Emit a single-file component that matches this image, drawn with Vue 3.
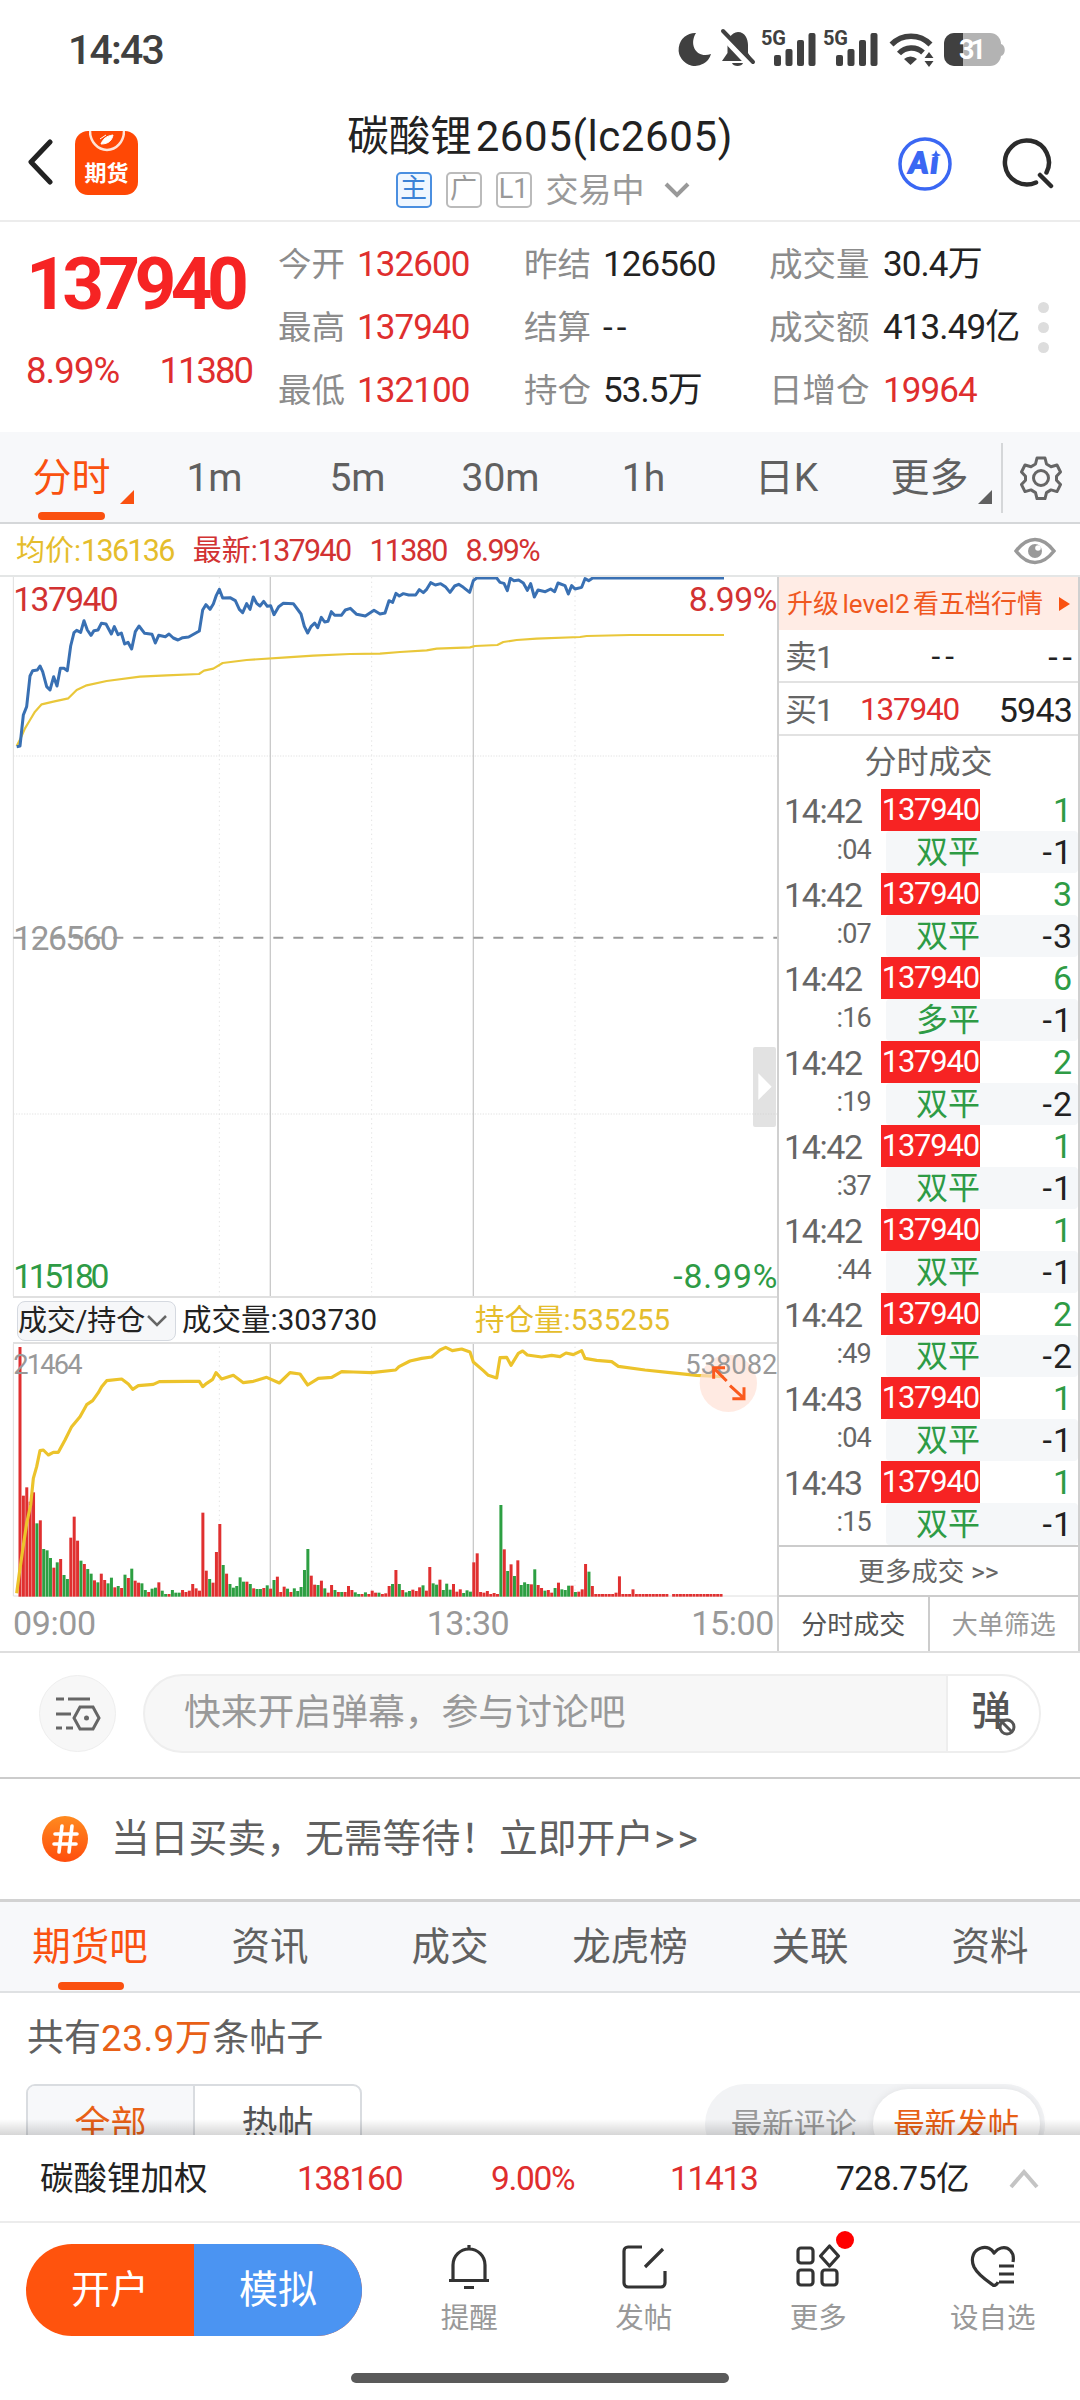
<template>
  <div class="page">
    <!-- 状态栏 -->
    <div class="status-bar">
      <span class="clock">14:43</span>
      <svg class="status-icons" width="340" height="42" viewBox="670 28 340 42">
        <path d="M696 33a16.500 16.500 0 1 0 15 21c-13 5-23-8-15-21z" fill="#404040" />
        <path d="M738 32c-7 1-10.500 7-10.500 13v8l-5.500 8h31l-5-8v-8c0-6-3-13-10-13z" fill="#404040" />
        <path d="M732 63h11c-1 4-10 4-11 0z" fill="#404040" />
        <path d="M721 33l31 33" stroke="#fff" stroke-width="8" />
        <path d="M723 31l30 31" stroke="#404040" stroke-width="4" stroke-linecap="round" />
        <text x="761" y="45" class="net" textLength="25">5G</text>
        <text x="823" y="45" class="net" textLength="25">5G</text>
        <g v-for="x in [774, 836]" :key="x" fill="#404040">
          <rect :x="x" y="55" width="7" height="11" rx="2" />
          <rect :x="x + 11.500" y="49" width="7" height="17" rx="2" />
          <rect :x="x + 23" y="40" width="7" height="26" rx="2" />
          <rect :x="x + 34.500" y="33" width="7" height="33" rx="2" />
        </g>
        <g fill="none" stroke="#404040" stroke-width="5.500">
          <path d="M891.500 44.500a27 27 0 0 1 39 0" />
          <path d="M899 53.500a17 17 0 0 1 24-1" />
        </g>
        <path d="M904 59a9.500 9.500 0 0 1 13 0l-6.500 6z" fill="#404040" />
        <path d="M929 52l4.500 6h-9zM929 67l4.500-6h-9z" fill="#404040" />
        <rect x="944" y="33" width="57" height="33" rx="11" fill="#b3b3b3" />
        <path d="M963 33v33h-9a10 10 0 0 1-10-10V43a10 10 0 0 1 10-10z" fill="#404040" />
        <path d="M1001 44c5 1 5 11 0 12z" fill="#b3b3b3" />
        <text x="959" y="59" class="battery" textLength="27">31</text>
      </svg>
    </div>

    <!-- 标题栏 -->
    <header class="header">
      <svg class="back" width="26" height="46" viewBox="0 0 26 46"><path d="M23 3L4 23l19 20" fill="none" stroke="#222" stroke-width="5" stroke-linecap="round" stroke-linejoin="round" /></svg>
      <div class="app-logo">
        <svg width="36" height="22" viewBox="0 0 36 22">
          <path d="M1 0a17 19 0 0 0 34 0" fill="none" stroke="#ffe3d6" stroke-width="2.500" />
          <path d="M12 13c2-5 5-8 12-9-1 5-4 9-12 9zM11 8l6-4" fill="#fff" stroke="#fff" stroke-width="1" />
        </svg>
        <span>期货</span>
      </div>
      <div class="title">
        <h1>碳酸锂<span>2605(lc2605)</span></h1>
        <div class="sub">
          <i class="tag main">主</i><i class="tag">广</i><i class="tag">L1</i>
          <span>交易中</span>
          <svg width="26" height="16" viewBox="0 0 26 16"><path d="M2 2l11 11L24 2" fill="none" stroke="#999" stroke-width="4" /></svg>
        </div>
      </div>
      <svg class="ai" width="54" height="54" viewBox="0 0 54 54">
        <circle cx="27" cy="27" r="25" fill="none" stroke="#3a67f3" stroke-width="3.500" />
        <text x="11" y="36" class="ai-text" textLength="29">Aı</text>
        <path d="M38 13l1.500 3.500L43 18l-3.500 1.500L38 23l-1.500-3.500L33 18l3.500-1.500z" fill="#3a67f3" />
      </svg>
      <svg class="search" width="54" height="54" viewBox="0 0 54 54">
        <path d="M36 46.500a22 22 0 1 1 10.500-10M40 39l11 11" fill="none" stroke="#2b2b2b" stroke-width="4.500" stroke-linecap="round" />
      </svg>
    </header>

    <!-- 行情数据 -->
    <section class="quote">
      <div class="price">
        <div class="last">137940</div>
        <div class="change"><span>8.99%</span><span class="diff">11380</span></div>
      </div>
      <div class="stats">
        <div v-for="s in stats" :key="s.label" class="stat">
          <label>{{ s.label }}</label><b :class="{ up: s.up, none: s.value === '--' }">{{ s.value }}</b>
        </div>
      </div>
      <div class="dots"><i></i><i></i><i></i></div>
    </section>

    <!-- 周期 -->
    <nav class="periods">
      <div v-for="(p, i) in periods" :key="p" class="period" :class="{ active: i === 0 }">
        <span>{{ p }}</span>
        <svg v-if="i === 0 || i === 6" class="corner" width="14" height="14"><path d="M14 0v14H0z" fill="currentColor" /></svg>
      </div>
      <div class="gear">
        <svg width="42" height="44" viewBox="0 0 42 44" fill="none" stroke="#666" stroke-width="3" stroke-linejoin="round">
          <path d="M17 2h8l1.500 6 4.500 2.700 6-1.700 3.500 7-4 4.300v4l4 4.300-3.500 7-6-1.700-4.500 2.700-1.500 6h-8l-1.500-6-4.500-2.700-6 1.700-3.500-7 4-4.300v-4l-4-4.300 3.500-7 6 1.700 4.500-2.700z" />
          <circle cx="21" cy="22" r="7.500" />
        </svg>
      </div>
    </nav>

    <div class="latest">
      <span class="avg">均价:<b>136136</b></span><span>最新:<b>137940</b></span><b>11380</b><b>8.99%</b>
      <svg width="42" height="28" viewBox="0 0 42 28">
        <path d="M2 14C9 5 15 2.500 21 2.500S33 5 40 14c-7 9-13 11.500-19 11.500S9 23 2 14z" fill="none" stroke="#999" stroke-width="3.500" />
        <circle cx="21" cy="14" r="7" fill="#999" /><circle cx="24" cy="11" r="2.800" fill="#fff" />
      </svg>
    </div>

    <main class="market">
      <div class="charts">
        <!-- 分时图 -->
        <svg class="price-chart" width="778" height="719" viewBox="0 51 2334 2157">
          <g fill="none" stroke="#dedede" stroke-width="3">
            <path d="M40 51V2208" />
            <path d="M658 51V2208M1115 51V2208M1725 51V2208" stroke="#e3e3e3" stroke-dasharray="4 10" />
            <path d="M40 588H2334M40 1662H2334" stroke="#e3e3e3" stroke-dasharray="4 4" />
            <path d="M811 51V2208M1420 51V2208" stroke="#cacaca" stroke-width="4" />
          </g>
          <path d="M40 1133H2334" stroke="#999" stroke-width="6" stroke-dasharray="30 30" />
          <polyline :points="avgLine" class="line" stroke="#e9c73a" stroke-width="6.500" />
          <polyline :points="priceLine" class="line" stroke="#3970b3" stroke-width="9" />
          <g class="axis">
            <text x="40" y="153" textLength="316" fill="#d23232">137940</text>
            <text x="2066" y="153" textLength="266" fill="#d23232">8.99%</text>
            <text x="40" y="1169" textLength="316" fill="#999">126560</text>
            <text x="40" y="2185" textLength="288" fill="#2e9b45">115180</text>
            <text x="2020" y="2185" textLength="312" fill="#2e9b45">-8.99%</text>
          </g>
          <rect x="2259" y="1461" width="69" height="240" rx="6" fill="#cfcfcf" opacity=".6" />
          <path d="M2275 1540l40 40-40 40z" fill="#fff" />
        </svg>
        <div class="indicator">
          <div class="picker">成交/持仓<svg width="20" height="12" viewBox="0 0 20 12"><path d="M1 1l9 9 9-9" fill="none" stroke="#666" stroke-width="2.500" /></svg></div>
          <span class="volume">成交量:303730</span>
          <span class="hold">持仓量:535255</span>
        </div>
        <!-- 成交量柱与持仓线 -->
        <svg class="volume-chart" width="778" height="254" viewBox="0 252 2334 762">
          <g fill="none" stroke="#dedede" stroke-width="3">
            <path d="M40 252V1008H2334" />
            <path d="M658 260V1008M1115 260V1008M1725 260V1008" stroke="#e3e3e3" stroke-dasharray="4 10" />
            <path d="M811 252V1008M1420 252V1008" stroke="#cacaca" stroke-width="4" />
          </g>
          <rect v-for="b in bars" :key="b.x" :x="b.x" :y="b.y" width="9" :height="b.h" :fill="b.color" />
          <polyline :points="holdLine" class="line" stroke="#ecc32b" stroke-width="9.500" />
          <circle cx="2185" cy="370" r="86" fill="#ffdfd3" opacity=".65" />
          <g class="axis small" fill="#999">
            <text x="40" y="342" textLength="208">21464</text>
            <text x="2056" y="342" textLength="276">538082</text>
          </g>
          <path d="M2180 363l-40-40M2141 356v-33h34M2190 377l42 38M2232 382v34h-35" fill="none" stroke="#fa5a1e" stroke-width="9" />
        </svg>
        <div class="times"><span>09:00</span><span class="mid">13:30</span><span>15:00</span></div>
      </div>

      <!-- 盘口 -->
      <aside class="book">
        <div class="upgrade"><span>升级 level2 看五档行情</span><svg width="11" height="14"><path d="M0 0l11 7-11 7z" fill="#fa5110" /></svg></div>
        <div class="level"><span>卖1</span><b class="none">--</b><em class="none">--</em></div>
        <div class="level"><span>买1</span><b class="up">137940</b><em>5943</em></div>
        <div class="book-title">分时成交</div>
        <div v-for="(t, i) in trades" :key="i" class="trade">
          <div class="when"><span>{{ t[0] }}</span><small>{{ t[1] }}</small></div>
          <div class="deal">
            <div class="top"><b>137940</b><span>{{ t[3] }}</span></div>
            <div class="bottom"><b>{{ t[2] }}</b><span><i>-</i>{{ t[4] }}</span></div>
          </div>
        </div>
        <div class="more-trades">更多成交 &gt;&gt;</div>
        <div class="book-tabs"><span class="on">分时成交</span><span>大单筛选</span></div>
      </aside>
    </main>

    <!-- 弹幕 -->
    <div class="danmu">
      <div class="danmu-set">
        <svg width="46" height="36" viewBox="0 0 46 36" fill="none" stroke="#666" stroke-width="3">
          <path d="M1 3h8M13 3h22M1 18h15M1 32h6M11 32h7" />
          <path d="M25 11h13l6 11-6 11H25l-6-11z" /><circle cx="31.500" cy="22" r="2.500" fill="#666" stroke="none" />
        </svg>
      </div>
      <div class="danmu-input">
        <span>快来开启弹幕，参与讨论吧</span>
        <div class="danmu-switch">弹
          <svg width="20" height="20" viewBox="0 0 20 20"><circle cx="10" cy="10" r="7" fill="#fff" stroke="#555" stroke-width="3" /><path d="M5 5l10 10" stroke="#555" stroke-width="3" /></svg>
        </div>
      </div>
    </div>

    <div class="promo">
      <svg width="46" height="46" viewBox="0 0 46 46">
        <defs><linearGradient id="hash" x1="0" y1="0" x2="0" y2="1"><stop offset="0" stop-color="#ff8a1f" /><stop offset="1" stop-color="#ff4d0d" /></linearGradient></defs>
        <circle cx="23" cy="23" r="23" fill="url(#hash)" />
        <path d="M20 10l-3 26M30 10l-3 26M13 18h22M12 28h22" fill="none" stroke="#fff" stroke-width="3.600" stroke-linecap="round" />
      </svg>
      <span>当日买卖，无需等待！立即开户<b>&gt;&gt;</b></span>
    </div>

    <nav class="tabs"><div v-for="(t, i) in tabs" :key="t" :class="{ active: i === 0 }">{{ t }}</div></nav>

    <section class="posts">
      <p>共有<b>23.9万</b>条帖子</p>
      <div class="filters">
        <div class="seg"><span class="on">全部</span><span>热帖</span></div>
        <div class="sort"><span>最新评论</span><span class="on">最新发帖</span></div>
      </div>
    </section>

    <footer class="footer">
      <div class="weighted">
        <span class="name">碳酸锂加权</span><b>138160</b><b>9.00%</b><b>11413</b><span class="amount">728.75亿</span>
        <svg width="30" height="20" viewBox="0 0 30 20"><path d="M2 18L15 3l13 15" fill="none" stroke="#c4c4c4" stroke-width="4" /></svg>
      </div>
      <div class="actions">
        <div class="buttons"><span>开户</span><span class="demo">模拟</span></div>
        <div class="action">
          <svg viewBox="0 0 46 48"><path d="M23 2v4M7 37V22a16 16 0 0 1 32 0v15M3 37.500h40M18 44.500h10" /></svg>
          <span>提醒</span>
        </div>
        <div class="action">
          <svg viewBox="0 0 46 48"><path d="M21 4H7a4 4 0 0 0-4 4v32a4 4 0 0 0 4 4h33a4 4 0 0 0 4-4V28M42 6L24 24" /></svg>
          <span>发帖</span>
        </div>
        <div class="action">
          <svg viewBox="0 0 46 48"><rect x="3" y="5" width="15" height="15" rx="3" /><rect x="3" y="27" width="15" height="15" rx="3" /><rect x="27" y="27" width="15" height="15" rx="3" /><path d="M34.500 3l9 10-9 10-9-10z" /></svg>
          <span>更多</span><i class="badge"></i>
        </div>
        <div class="action">
          <svg viewBox="0 0 46 48"><path d="M43 19C45 9 38 3 31 5c-4 1-6 4-7 5-2-4-7-7-13-5C4 7 0 15 4 24c4 8 12 13 19 18 1 1 4 0 5-3M29 23h15M29 31h15M29 39h15" /></svg>
          <span>设自选</span>
        </div>
      </div>
      <div class="home"></div>
    </footer>
  </div>
</template>

<script setup>
const stats = [
  { label: '今开', value: '132600', up: true },
  { label: '昨结', value: '126560' },
  { label: '成交量', value: '30.4万' },
  { label: '最高', value: '137940', up: true },
  { label: '结算', value: '--' },
  { label: '成交额', value: '413.49亿' },
  { label: '最低', value: '132100', up: true },
  { label: '持仓', value: '53.5万' },
  { label: '日增仓', value: '19964', up: true }
];

const periods = ['分时', '1m', '5m', '30m', '1h', '日K', '更多'];
const tabs = ['期货吧', '资讯', '成交', '龙虎榜', '关联', '资料'];

// 时间、秒、类型、现手、增仓
const trades = [
  ['14:42', ':04', '双平', 1, 1],
  ['14:42', ':07', '双平', 3, 3],
  ['14:42', ':16', '多平', 6, 1],
  ['14:42', ':19', '双平', 2, 2],
  ['14:42', ':37', '双平', 1, 1],
  ['14:42', ':44', '双平', 1, 1],
  ['14:42', ':49', '双平', 2, 2],
  ['14:43', ':04', '双平', 1, 1],
  ['14:43', ':15', '双平', 1, 1]
];

const priceLine = '50,560 60,558 70,465 80,440 90,348 98,332 112,330 120,318 128,335 140,380 150,390 161,350 171,378 181,325 192,325 202,332 212,258 222,218 230,211 242,217 252,182 262,210 273,226 282,212 294,210 304,190 318,192 334,222 343,200 354,224 364,219 374,252 384,247 395,267 406,215 417,198 434,220 456,223 466,249 476,226 496,230 507,222 520,234 534,240 548,233 566,231 598,213 608,150 618,134 630,148 640,132 649,106 658,88 668,114 690,113 706,122 718,148 728,158 740,131 750,148 760,111 770,130 780,138 791,124 802,139 812,137 822,164 836,140 850,130 880,131 892,147 903,162 913,199 923,219 933,200 944,189 953,203 964,172 974,186 984,184 994,155 1004,166 1024,166 1036,150 1051,145 1070,163 1096,168 1122,151 1140,162 1155,159 1167,122 1178,127 1188,100 1198,108 1210,101 1226,105 1247,105 1258,89 1270,98 1280,88 1292,68 1306,75 1322,71 1336,80 1350,97 1364,78 1376,73 1390,82 1409,97 1420,62 1430,54 1490,54 1500,67 1512,70 1522,92 1531,55 1542,62 1556,60 1570,69 1582,91 1592,71 1603,111 1614,90 1636,95 1652,87 1664,95 1674,69 1695,77 1705,102 1715,77 1725,87 1745,82 1755,56 1766,62 1778,54 2172,54';
const avgLine = '50,558 62,535 75,505 90,480 105,455 125,433 160,425 205,415 230,390 260,376 320,363 420,350 500,346 597,342 612,332 640,326 668,309 740,300 860,292 940,287 1050,282 1140,281 1200,276 1280,271 1310,266 1410,262 1425,258 1492,255 1510,246 1550,240 1610,236 1740,231 1760,228 1890,225 2172,225';
const holdLine = '50,1000 58,940 68,870 80,790 92,735 100,655 110,620 120,572 130,570 145,585 160,577 175,577 195,540 215,500 240,470 260,434 278,422 295,398 305,380 320,362 365,357 385,372 398,388 415,377 460,373 478,365 560,364 598,364 608,380 620,370 638,358 648,338 665,357 700,346 730,368 760,364 800,352 838,369 870,338 900,342 923,375 955,355 995,352 1025,335 1060,336 1115,338 1187,330 1197,320 1230,303 1265,295 1295,291 1320,270 1337,262 1357,272 1385,267 1410,276 1420,306 1450,332 1465,346 1490,354 1500,293 1520,292 1533,316 1555,280 1568,273 1582,285 1625,291 1655,286 1680,290 1698,279 1720,284 1745,272 1755,295 1790,301 1835,305 1855,319 1935,330 2010,338 2090,346 2172,350';

// 正数为红柱，负数为绿柱
const volumes = [
  749, 303, 328, 285, 313, -220, 229, -143, -139, -116, 87, -103, 113, -65, -53, 177, 240, 168, -108, 98,
  -83, -69, 49, -43, 69, 50, -40, -57, 28, -32, 26, -66, 56, -84, 48, 42, -40, -20, 14, -24,
  -27, 43, -18, -8, 8, -20, -12, -12, 20, 14, 18, 38, 25, 18, 252, 78, -53, 42, 134, 218,
  -95, 69, -38, -27, -32, -58, -45, 45, -38, 25, -23, -23, 26, -34, 24, -50, 60, 14, 30, -24,
  14, -25, -17, -29, -80, -143, 63, 36, -35, 48, -25, 12, 35, -20, 14, -14, 14, 32, 20, -13,
  -8, 8, -13, 8, 18, 12, -12, 8, 10, 32, -38, 80, -38, 20, -13, -17, 21, 17, 28, -34,
  18, 89, -40, -36, 51, -20, -39, -21, 38, 15, 22, -11, -19, -15, 103, 130, 14, 12, 17, 8,
  11, 8, -275, 142, -77, 97, -62, 109, -35, -43, -38, 37, -82, 35, 26, -18, 20, 12, -26, 42,
  -22, -20, -33, 33, -14, 15, 22, 98, -75, 32, 8, 8, 8, 8, 8, 8, 12, 61, 8, 8,
  8, 22, 8, 8, 8, 8, 8, 8, 8, 8, 8, 8, 0, 8, 8, 8, 8, 8, 8, 8,
  8, 8, 8, 8, 8, 8, 8, 8
];
const bars = volumes.map((v, i) => ({
  x: 55.5 + i * 10.16,
  y: 1010 - Math.abs(v),
  h: Math.abs(v),
  color: v > 0 ? '#e03030' : '#2d9f42'
}));
</script>

<style>
body {
  background: #fff;
}
</style>

<style scoped>
.page {
  width: 1080px;
  height: 2400px;
  overflow: hidden;
  display: flex;
  flex-direction: column;
  background: #fff;
  color: #222;
  font-family: Roboto, "Noto Sans CJK SC", sans-serif;
  line-height: 1;
}
.page * {
  box-sizing: border-box;
}
.page > * {
  flex-shrink: 0;
}
b, i, em {
  font-weight: 400;
  font-style: normal;
}
svg {
  display: block;
  flex-shrink: 0;
}
.up {
  color: #df2e2e !important;
}

.status-bar {
  height: 98px;
  padding: 28px 70px 0 68px;
  display: flex;
  justify-content: space-between;
}
.clock {
  font-size: 41px;
  font-weight: 500;
  letter-spacing: -1.8px;
  line-height: 44px;
  color: #404040;
}
.net {
  font-size: 20px;
  font-weight: 700;
  fill: #404040;
}
.battery {
  font-size: 27px;
  font-weight: 700;
  fill: #fff;
}

.header {
  height: 124px;
  border-bottom: 2px solid #ececec;
  display: flex;
  padding-left: 27px;
}
.back {
  margin-top: 41px;
}
.app-logo {
  width: 63px;
  height: 64px;
  margin: 33px 0 0 22px;
  border-radius: 13px;
  background: #ff4805;
  color: #fff;
  display: flex;
  flex-direction: column;
  align-items: center;
  justify-content: space-between;
  padding-bottom: 10px;
}
.app-logo span {
  font-size: 22px;
  font-weight: 700;
}
.title {
  width: 430px;
  margin-left: 187px;
  display: flex;
  flex-direction: column;
  align-items: center;
}
.title h1 {
  margin: 15px 0 0;
  font-size: 41.5px;
  line-height: 48px;
  font-weight: 400;
  white-space: nowrap;
}
.title h1 span {
  font-size: 42px;
  letter-spacing: .6px;
  margin-left: 4px;
}
.sub {
  display: flex;
  align-items: center;
  margin: 11px 0 0 5px;
  color: #999;
  font-size: 33px;
  height: 36px;
}
.tag {
  width: 36px;
  height: 36px;
  border: 2px solid #bbb;
  border-radius: 5px;
  font-size: 27px;
  line-height: 31px;
  text-align: center;
  margin-right: 14px;
}
.tag.main {
  border-color: #4b8fe0;
  color: #3c82d6;
  background: #f0f7ff;
}
.sub svg {
  margin-left: 19px;
}
.ai {
  margin: 39px 0 0 143px;
}
.ai-text {
  font-family: Lato, sans-serif;
  font-size: 29px;
  font-weight: 900;
  font-style: italic;
  fill: #3a67f3;
  stroke: #3a67f3;
  stroke-width: 1.8;
}
.search {
  margin: 38px 0 0 48px;
}

.quote {
  height: 210px;
  display: flex;
}
.price {
  width: 278px;
  padding: 24px 0 0 26px;
  color: #df2e2e;
}
.last {
  color: #f62424;
  font-size: 73px;
  font-weight: 700;
  letter-spacing: -5.7px;
  line-height: 76px;
}
.change {
  margin-top: 28px;
  font-size: 36.5px;
  line-height: 42px;
  letter-spacing: -.9px;
}
.diff {
  margin-left: 40px;
  letter-spacing: -2px;
}
.stats {
  width: 751px;
  padding-top: 11px;
  display: grid;
  grid-template-columns: 246px 245px 260px;
  grid-auto-rows: 63px;
}
.stat {
  display: flex;
  align-items: center;
  white-space: nowrap;
}
.stat label {
  width: 79px;
  font-size: 33.5px;
  color: #8c8c8c;
}
.stat:nth-child(3n) label {
  width: 114px;
}
.stat b {
  font-size: 35px;
  letter-spacing: -.9px;
}
.stat b.none {
  letter-spacing: 4px;
}
.dots {
  margin: 80px 0 0 9px;
  display: flex;
  flex-direction: column;
  gap: 9px;
}
.dots i {
  width: 11px;
  height: 11px;
  border-radius: 50%;
  background: #ddd;
}

.periods {
  height: 92px;
  background: #f7f8fa;
  border-bottom: 2px solid #d5d7d9;
  display: flex;
}
.period {
  position: relative;
  width: 143px;
  padding-top: 3px;
  display: flex;
  align-items: center;
  justify-content: center;
  font-size: 39px;
  color: #606060;
}
.period.active {
  color: #fa5110;
}
.period.active::after {
  content: "";
  position: absolute;
  left: 38px;
  bottom: 2px;
  width: 67px;
  height: 8px;
  border-radius: 4px;
  background: #fa5110;
}
.corner {
  position: absolute;
  right: 9px;
  bottom: 18px;
}
.gear {
  width: 77px;
  height: 70px;
  margin-top: 11px;
  border-left: 2px solid #d5d7d9;
  display: flex;
  align-items: center;
  justify-content: center;
}

.latest {
  height: 53px;
  border-bottom: 2px solid #e4e6e6;
  padding: 3px 24px 0 16px;
  display: flex;
  align-items: center;
  gap: 19px;
  font-size: 29px;
  color: #d23232;
}
.latest b {
  font-size: 30.5px;
  letter-spacing: -1.7px;
}
.latest .avg {
  color: #e5bd2c;
}
.latest svg {
  margin-left: auto;
}

.market {
  height: 1076px;
  border-bottom: 2px solid #dedede;
  display: flex;
}
.charts {
  width: 778px;
}
.line {
  fill: none;
  stroke-linejoin: round;
}
.axis {
  font-size: 101px;
}
.axis.small {
  font-size: 82px;
}
.indicator {
  height: 48px;
  margin-left: 13px;
  border-top: 2px solid #e0e0e0;
  border-bottom: 2px solid #e0e0e0;
  padding-top: 2px;
  display: flex;
  align-items: center;
  font-size: 29px;
  white-space: nowrap;
}
.picker {
  width: 159px;
  height: 40px;
  margin-left: 4px;
  border: 1px solid #d5d9e0;
  border-radius: 8px;
  background: #f6f7f9;
  display: flex;
  align-items: center;
  gap: 2px;
  letter-spacing: -.2px;
}
.volume {
  margin-left: 6px;
  width: 293px;
  font-size: 29.5px;
}
.hold {
  color: #e5bd2c;
  font-size: 29.5px;
}
.times {
  display: flex;
  justify-content: space-between;
  padding: 5px 4px 0 13px;
  font-size: 34px;
  letter-spacing: -.4px;
  line-height: 40px;
  color: #999;
}
.mid {
  margin-left: 149px;
}

.book {
  width: 303px;
  margin-left: -1px;
  border-left: 2px solid #d0d0d0;
  border-right: 2px solid #d0d0d0;
}
.upgrade {
  height: 53px;
  background: #ffece5;
  color: #f0581f;
  display: flex;
  align-items: center;
  justify-content: space-between;
  padding: 0 8px;
  font-size: 26px;
  word-spacing: -3px;
}
.level {
  height: 53px;
  border-bottom: 2px solid #e2e2e2;
  display: flex;
  align-items: center;
  padding: 2px 6px 0;
  font-size: 34px;
}
.level span {
  width: 60px;
  font-size: 32px;
  color: #666;
  letter-spacing: -1px;
}
.level b {
  width: 114px;
  text-align: right;
  font-size: 31.500px;
  letter-spacing: -1.2px;
}
.level em {
  margin-left: auto;
  letter-spacing: -.8px;
}
.level .none {
  letter-spacing: 5px;
  margin-right: -5px;
}
.book-title {
  height: 53px;
  line-height: 53px;
  text-align: center;
  font-size: 32px;
  color: #666;
}
.trade {
  height: 84px;
  display: flex;
}
.when {
  width: 102px;
  padding: 2px 10px 0 5px;
  color: #666;
}
.when span {
  display: block;
  font-size: 34px;
  line-height: 40px;
  letter-spacing: -1.4px;
}
.when small {
  display: block;
  text-align: right;
  font-size: 27px;
  line-height: 38px;
  letter-spacing: -.8px;
}
.deal {
  flex: 1;
  font-size: 34px;
  text-align: right;
}
.top, .bottom {
  height: 42px;
  display: flex;
  align-items: center;
  justify-content: space-between;
  padding-right: 6px;
}
.top span {
  color: #2e9b45;
}
.top b {
  width: 99px;
  height: 42px;
  line-height: 42px;
  background: #f72323;
  color: #fff;
  font-size: 31px;
  letter-spacing: -1.2px;
  padding-right: 1px;
}
.bottom {
  margin-left: 5px;
  background: #f5f7f9;
  border-radius: 4px;
}
.bottom b {
  width: 94px;
  font-size: 32px;
  color: #2e9b45;
}
.bottom i {
  margin-right: 1px;
}
.more-trades {
  height: 52px;
  border-top: 2px solid #ccc;
  border-bottom: 2px solid #ccc;
  text-align: center;
  font-size: 26.5px;
  line-height: 49px;
  color: #666;
}
.book-tabs {
  height: 54px;
  display: flex;
  font-size: 26px;
}
.book-tabs span {
  flex: 1;
  text-align: center;
  line-height: 56px;
  color: #999;
}
.book-tabs .on {
  border-right: 2px solid #ccc;
  color: #555;
}

.danmu {
  height: 126px;
  border-bottom: 2px solid #ccc;
  display: flex;
  align-items: center;
  padding: 0 39px 3px;
}
.danmu-set {
  width: 77px;
  height: 77px;
  border: 1px solid #eee;
  border-radius: 50%;
  background: #f7f7f7;
  display: flex;
  align-items: center;
  justify-content: center;
}
.danmu-input {
  flex: 1;
  height: 79px;
  margin-left: 27px;
  border: 2px solid #eee;
  border-radius: 40px;
  background: #f7f7f7;
  overflow: hidden;
  display: flex;
  justify-content: space-between;
  align-items: center;
  padding-left: 39px;
  font-size: 36.8px;
  color: #999;
}
.danmu-switch {
  position: relative;
  width: 93px;
  height: 75px;
  line-height: 72px;
  border-left: 2px solid #eee;
  background: #fff;
  padding-left: 23px;
  font-size: 40px;
  font-weight: 500;
  color: #555;
}
.danmu-switch svg {
  position: absolute;
  left: 49px;
  top: 41px;
}

.promo {
  height: 123px;
  border-bottom: 3px solid #d2d2d2;
  display: flex;
  align-items: center;
  gap: 23px;
  padding-left: 42px;
  font-size: 38.8px;
  color: #606060;
}
.promo b {
  letter-spacing: 3px;
}

.tabs {
  height: 91px;
  background: #f7f8fa;
  border-bottom: 2px solid #dfe1e3;
  display: flex;
}
.tabs div {
  position: relative;
  flex: 1;
  text-align: center;
  font-size: 38.5px;
  line-height: 90px;
  color: #606060;
}
.tabs .active {
  color: #fa5110;
}
.tabs .active::after {
  content: "";
  position: absolute;
  left: 58px;
  bottom: 1px;
  width: 66px;
  height: 8px;
  border-radius: 4px;
  background: #fa5110;
}

.posts {
  position: relative;
  height: 142px;
  overflow: hidden;
}
.posts::after {
  content: "";
  position: absolute;
  left: 0;
  right: 0;
  bottom: 0;
  height: 16px;
  background: linear-gradient(rgba(0, 0, 0, 0), rgba(0, 0, 0, .16));
}
.posts p {
  margin: 0;
  padding: 23px 0 0 27px;
  line-height: 46px;
  font-size: 37px;
  color: #606060;
}
.posts p b {
  color: #e86016;
  letter-spacing: .4px;
}
.filters {
  margin-top: 22px;
  padding: 0 35px 0 26px;
  display: flex;
  justify-content: space-between;
}
.seg {
  width: 336px;
  height: 80px;
  border: 2px solid #d9dce0;
  border-radius: 9px;
  overflow: hidden;
  display: flex;
  font-size: 36px;
  color: #555;
}
.seg span {
  flex: 1;
  text-align: center;
  line-height: 78px;
}
.seg .on {
  background: #f7f8fa;
  border-right: 2px solid #d9dce0;
  color: #e86016;
}
.sort {
  width: 340px;
  height: 80px;
  border-radius: 40px;
  background: #f2f3f5;
  padding: 5px;
  display: flex;
  font-size: 31.5px;
  line-height: 74px;
  color: #999;
}
.sort span {
  width: 163px;
  padding-left: 5px;
  text-align: center;
}
.sort .on {
  width: 168px;
  height: 70px;
  padding-left: 0;
  border-radius: 35px;
  background: #fff;
  color: #e86016;
  box-shadow: 0 0 8px rgba(0, 0, 0, .08);
}

.footer {
  height: 266px;
  background: #fff;
}
.weighted {
  height: 88px;
  border-bottom: 2px solid #ececec;
  display: grid;
  grid-template-columns: 257px 194px 179px 166px 173px auto;
  align-items: center;
  padding: 2px 0 0 40px;
  font-size: 33.5px;
  letter-spacing: -1.3px;
}
.weighted .name {
  letter-spacing: 0;
}
.weighted b {
  color: #df2e2e;
}
.weighted .amount {
  letter-spacing: -.5px;
}
.actions {
  height: 151px;
  display: flex;
  padding-left: 26px;
}
.buttons {
  width: 336px;
  height: 92px;
  margin: 21px 20px 0 0;
  border-radius: 46px;
  overflow: hidden;
  display: flex;
  background: #ff530d;
  color: #fff;
  font-size: 39px;
}
.buttons span {
  flex: 1;
  text-align: center;
  line-height: 92px;
}
.buttons .demo {
  background: #4b94f2;
}
.action {
  position: relative;
  width: 174.5px;
  padding-top: 20px;
  display: flex;
  flex-direction: column;
  align-items: center;
  font-size: 28.5px;
  color: #999;
}
.action svg {
  width: 46px;
  height: 48px;
  fill: none;
  stroke: #333;
  stroke-width: 3.2;
  stroke-linejoin: round;
}
.action span {
  margin-top: 13px;
  line-height: 30px;
}
.badge {
  position: absolute;
  left: 105px;
  top: 8px;
  width: 18px;
  height: 18px;
  border-radius: 50%;
  background: #f00;
}
.home {
  width: 378px;
  height: 10px;
  border-radius: 5px;
  margin: -1px auto 0;
  background: #5a5a5a;
}
</style>
